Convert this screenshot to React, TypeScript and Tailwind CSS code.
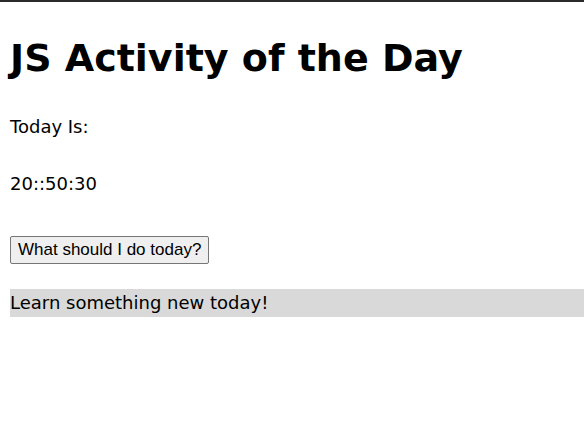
import { useState } from "react";

const activities = [
    "Learn something new today!",
    "Go for a walk outside.",
    "Read a chapter of a book.",
    "Call an old friend.",
];

const App: React.FC = () => {
    const [activity, setActivity] = useState(activities[0]);

    const pickActivity = () => {
        const next = activities[Math.floor(Math.random() * activities.length)];
        setActivity(next);
    };

    return (
        <div className="min-h-[442px] bg-white border-t-2 border-[#2b2b2b] pl-[10px] text-black font-['Comic_Sans_MS','DejaVu_Sans',sans-serif]">
            <h1 className="mt-[28px] h-[56px] leading-[56px] text-[38px] font-bold">JS Activity of the Day</h1>

            <p className="mt-[27px] h-[28px] leading-[28px] text-[18px]">Today Is:</p>

            <p className="mt-[29px] h-[28px] leading-[28px] text-[18px]">20::50:30</p>

            <div className="mt-[38px] flex">
                <button
                    onClick={pickActivity}
                    className="h-[28px] px-[7px] border border-[#767676] rounded-[2px] bg-[#efefef] text-[17px] leading-[26px] font-['Liberation_Sans',Arial,sans-serif]"
                >
                    What should I do today?
                </button>
            </div>

            <div className="mt-[25px] h-[28px] leading-[28px] bg-[#d9d9d9] text-[18px]">{activity}</div>
        </div>
    );
};

export default App;
